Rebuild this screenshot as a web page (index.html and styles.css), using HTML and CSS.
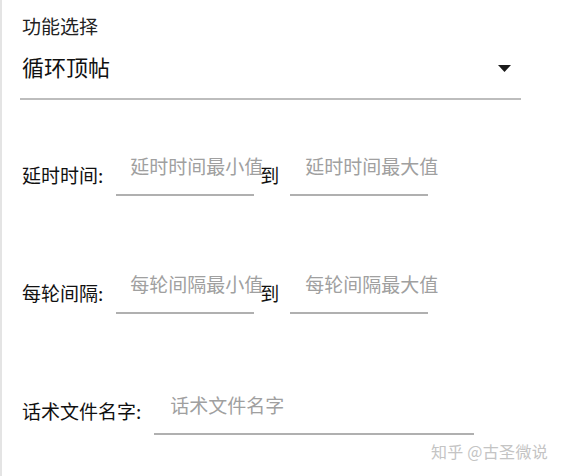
FILE: index.html
```html
<!DOCTYPE html>
<html lang="zh">
<head>
<meta charset="utf-8">
<title>功能选择</title>
<link rel="stylesheet" href="styles.css">
</head>
<body>
<div class="page">
  <div class="title">功能选择</div>
  <div class="select">
    <span class="select-text">循环顶帖</span>
    <svg class="arrow" width="13" height="7" viewBox="0 0 13 7"><polygon points="0,0 13,0 6.5,7" fill="#1a1a1a"/></svg>
  </div>

  <div class="row row-1">
    <span class="label">延时时间:</span>
    <div class="input input-small"><span class="ph">延时时间最小值</span></div>
    <span class="to">到</span>
    <div class="input input-small input-second"><span class="ph">延时时间最大值</span></div>
  </div>

  <div class="row row-2">
    <span class="label">每轮间隔:</span>
    <div class="input input-small"><span class="ph">每轮间隔最小值</span></div>
    <span class="to">到</span>
    <div class="input input-small input-second"><span class="ph">每轮间隔最大值</span></div>
  </div>

  <div class="row row-3">
    <span class="label label-3">话术文件名字:</span>
    <div class="input input-wide"><span class="ph">话术文件名字</span></div>
  </div>

  <div class="watermark">知乎 @古圣微说</div>
</div>
</body>
</html>
```

FILE: styles.css
```css
html, body {
  margin: 0;
  padding: 0;
  background: #ffffff;
}
body {
  width: 563px;
  height: 476px;
  overflow: hidden;
  font-family: "Noto Sans CJK SC", "Noto Sans", sans-serif;
  color: #1a1a1a;
}
.page {
  position: relative;
  box-sizing: border-box;
  height: 476px;
  border-left: 2px solid #e4e4e4;
  padding: 16px 0 0 20px;
}
.title {
  font-size: 19px;
  line-height: 19px;
  color: #222;
}
.select {
  display: flex;
  align-items: flex-start;
  justify-content: space-between;
  width: 501px;
  box-sizing: border-box;
  margin: 20px 0 0 -2px;
  padding: 0 10px 21px 2px;
  border-bottom: 2px solid #bdbdbd;
}
.select-text {
  font-size: 22px;
  line-height: 22px;
  color: #111;
}
.arrow {
  display: block;
  margin-top: 10px;
}
.row {
  display: flex;
  align-items: flex-start;
}
.row-1 { margin-top: 56px; }
.row-2 { margin-top: 78px; }
.row-3 { margin-top: 81px; }
.label {
  font-size: 19px;
  line-height: 19px;
  margin-top: 9px;
  margin-right: 13px;
  color: #111;
}
.label-3 {
  margin-top: 6px;
}
.input {
  box-sizing: border-box;
  padding: 0 0 19px 14px;
  border-bottom: 2px solid #b0b0b0;
  white-space: nowrap;
}
.input-small { width: 138px; }
.input-second { padding-left: 15px; }
.input-wide { width: 320px; padding-left: 16px; }
.ph {
  font-size: 19px;
  line-height: 19px;
  color: #a0a0a0;
  display: block;
}
.to {
  font-size: 19px;
  line-height: 19px;
  margin: 9px 11px 0 6px;
  color: #111;
}
.watermark {
  position: absolute;
  right: 15px;
  top: 443px;
  font-size: 16px;
  line-height: 16px;
  color: #c4c4c4;
  letter-spacing: 0.3px;
}
```
